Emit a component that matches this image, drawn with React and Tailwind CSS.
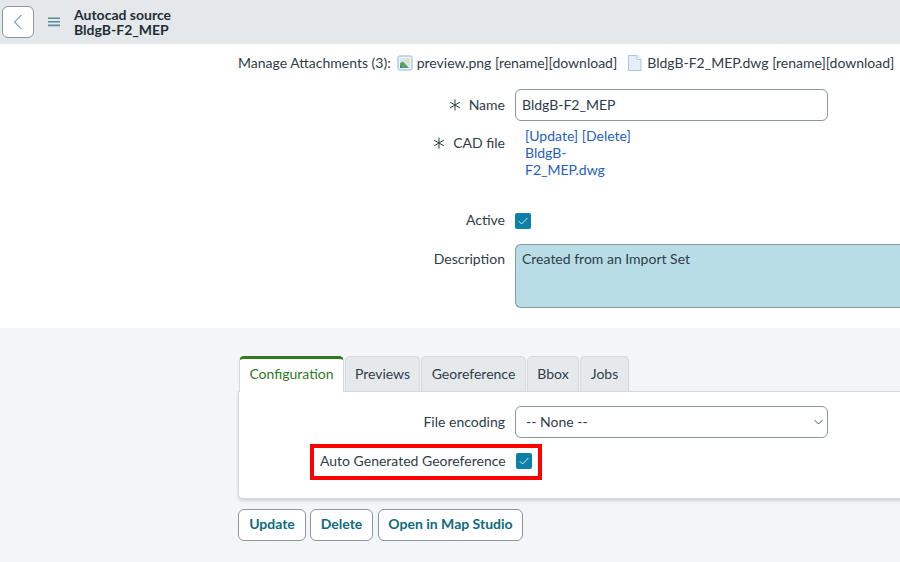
import React from "react";

function Check() {
  return (
    <span className="flex h-4 w-4 shrink-0 items-center justify-center rounded-[2px] bg-[#0c80a6]">
      <svg width="12" height="12" viewBox="0 0 12 12" fill="none" stroke="#e8f4f8" strokeWidth="0.9">
        <path d="M1.8 6.2 L4.6 9 L10.4 3" />
      </svg>
    </span>
  );
}

function Star() {
  return (
    <svg className="shrink-0" width="12" height="12" viewBox="0 0 12 12" fill="none" stroke="#293e40" strokeWidth="1">
      <path d="M6 0.5V11.5M1.2 3.2L10.8 8.8M10.8 3.2L1.2 8.8" />
    </svg>
  );
}

function Label({ children, req, className = "" }) {
  return (
    <div className={"flex w-[505px] shrink-0 items-center justify-end gap-[8px] text-[#2e3d49] " + className}>
      {req && <Star />}
      <span className="-translate-y-px">{children}</span>
    </div>
  );
}

function Tab({ children, active, w }) {
  if (active) {
    return (
      <div className="z-10 -mb-px flex h-[36px] w-[105px] items-center justify-center rounded-t-[5px] border-x border-t-[3px] border-x-[#d5d9dc] border-t-[#2f7a22] bg-white pb-[5px] text-[#2f7a22]">
        {children}
      </div>
    );
  }
  return (
    <div className={"ml-px flex h-[35px] items-center justify-center rounded-t-[5px] border border-b-0 border-[#d5d9dc] bg-[#e6e9eb] pb-[2px] text-[#2e3d49] " + w}>
      {children}
    </div>
  );
}

function Btn({ children, w }) {
  return (
    <button className={"flex h-[32px] items-center justify-center rounded-[6px] border border-[#8a979c] bg-white pb-[3px] text-[14px] font-bold text-[#0f6a80] " + w}>
      {children}
    </button>
  );
}

export default function App() {
  return (
    <div className="flex h-[562px] w-[900px] flex-col overflow-hidden bg-white font-['Lato',sans-serif] text-[14px] leading-[17px] text-[#2e3d49]">
      <header className="flex h-[44px] shrink-0 items-center bg-[#e5e8ea] pl-[2px]">
        <button className="flex h-[32px] w-[32px] items-center justify-center rounded-[6px] border border-[#8a979c] bg-white">
          <svg width="16" height="16" viewBox="0 0 16 16" fill="none" stroke="#1f7a94" strokeWidth="1">
            <path d="M11.5 1 L4.5 8 L11.5 15" />
          </svg>
        </button>
        <svg className="ml-[14px]" width="12" height="10" viewBox="0 0 12 10" fill="none" stroke="#5a8c9a" strokeWidth="1.6">
          <path d="M0 1.2H12M0 4.8H12M0 8.4H12" />
        </svg>
        <div className="ml-[14px] text-[14px] font-bold leading-[15px] text-[#1f2f38]">
          <div>Autocad source</div>
          <div>BldgB-F2_MEP</div>
        </div>
      </header>

      <div className="flex h-[38px] shrink-0 items-center whitespace-nowrap pb-px pl-[238px]">
        <span>Manage Attachments (3):</span>
        <svg className="ml-[6px] shrink-0" width="16" height="16" viewBox="0 0 16 16">
          <rect x="1" y="1" width="14" height="14" rx="1.5" fill="#eef5fc" stroke="#8db4de" />
          <rect x="3" y="3" width="10" height="10" fill="#d6e6f2" />
          <circle cx="10.5" cy="5.5" r="1.8" fill="#f3e27a" />
          <path d="M3 13V8L6 6.5L12 13Z" fill="#58a85c" />
          <path d="M3 13V10L6 13Z" fill="#3a78b8" />
        </svg>
        <span className="ml-[4px]">preview.png [rename][download]</span>
        <svg className="ml-[10px] shrink-0" width="15" height="16" viewBox="0 0 15 16">
          <path d="M1.5 0.5H10L14 4.5V15.5H1.5Z" fill="#e3eefa" stroke="#a9c6e6" />
          <path d="M10 0.5V4.5H14" fill="#fff" stroke="#a9c6e6" />
        </svg>
        <span className="ml-[5px]">BldgB-F2_MEP.dwg [rename][download]</span>
      </div>

      <div className="mt-[7px] flex h-[32px] shrink-0 items-center">
        <Label req>Name</Label>
        <div className="ml-[10px] flex h-[32px] w-[313px] items-center rounded-[6px] border border-[#8a979c] bg-white px-[6px] pb-px">
          BldgB-F2_MEP
        </div>
      </div>

      <div className="mt-[6px] flex h-[51px] shrink-0">
        <Label req className="h-[32px]">CAD file</Label>
        <div className="ml-[20px] w-[120px] text-[#1f5fbf]">
          <div>[Update] [Delete]</div>
          <div>BldgB-</div>
          <div>F2_MEP.dwg</div>
        </div>
      </div>

      <div className="mt-[34px] flex h-[18px] shrink-0 items-center">
        <Label className="-translate-y-px">Active</Label>
        <div className="ml-[10px]"><Check /></div>
      </div>

      <div className="mt-[14px] flex h-[64px] shrink-0">
        <Label className="h-[30px]">Description</Label>
        <div className="ml-[10px] h-[64px] flex-1 rounded-l-[6px] border border-r-0 border-[#8a979c] bg-[#b9dde6] px-[6px] pt-[5px]">
          Created from an Import Set
        </div>
      </div>

      <section className="mt-[20px] flex-1 bg-[#f4f5f7] pl-[238px] pt-[28px]">
        <div className="flex h-[35px] items-end pl-px">
          <Tab active>Configuration</Tab>
          <Tab w="w-[75px]">Previews</Tab>
          <Tab w="w-[105px]">Georeference</Tab>
          <Tab w="w-[52px]">Bbox</Tab>
          <Tab w="w-[49px]">Jobs</Tab>
        </div>
        <div className="relative h-[108px] w-[700px] rounded-bl-[5px] border border-r-0 border-[#d5d9dc] bg-white shadow-[0_2px_3px_rgba(0,0,0,0.15)]">
          <div className="ml-[276px] mt-[14px] flex h-[32px] w-[313px] items-center justify-between rounded-[6px] border border-[#8a979c] bg-white pb-px pl-[10px] pr-[4px]">
            <span>-- None --</span>
            <svg width="9" height="9" viewBox="0 0 9 9" fill="none" stroke="#4a5a64" strokeWidth="1">
              <path d="M0.5 3L4.5 7L8.5 3" />
            </svg>
          </div>
          <span className="absolute right-[433px] top-[21px] leading-[17px]">File encoding</span>
          <div className="absolute left-[71px] top-[52px] flex h-[36px] w-[232px] items-center border-4 border-[#ff0000] pl-[6px]">
            <span className="mr-[10px] -translate-y-[2px] whitespace-nowrap">Auto Generated Georeference</span>
            <span className="-translate-y-px"><Check /></span>
          </div>
        </div>
        <div className="mt-[10px] flex gap-[4px]">
          <Btn w="w-[68px]">Update</Btn>
          <Btn w="w-[63px]">Delete</Btn>
          <Btn w="ml-px w-[145px]">Open in Map Studio</Btn>
        </div>
      </section>
    </div>
  );
}
